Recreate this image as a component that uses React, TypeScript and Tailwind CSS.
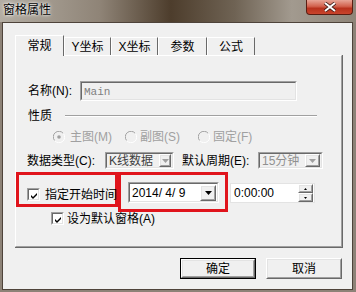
import type { ReactNode } from 'react'

const font = "font-['Liberation_Sans','Noto_Sans_CJK_SC',sans-serif]"

function Sunken({ className, children }: { className?: string; children?: ReactNode }) {
  return (
    <div className={`border border-t-[#a0a0a0] border-l-[#a0a0a0] border-b-white border-r-white ${className ?? ''}`}>
      <div className="h-full w-full border border-t-[#696969] border-l-[#696969] border-b-[#e3e3e3] border-r-[#e3e3e3]">
        {children}
      </div>
    </div>
  )
}

function Raised({ className, children }: { className?: string; children?: ReactNode }) {
  return (
    <div className={`border border-t-white border-l-white border-b-[#696969] border-r-[#696969] bg-[#f0f0f0] ${className ?? ''}`}>
      <div className="flex h-full w-full items-center justify-center border border-t-[#e3e3e3] border-l-[#e3e3e3] border-b-[#a0a0a0] border-r-[#a0a0a0]">
        {children}
      </div>
    </div>
  )
}

function Arrow({ color = '#000' }: { color?: string }) {
  return (
    <svg width="7" height="4" viewBox="0 0 7 4">
      <path d="M0 0h7L3.5 4z" fill={color} />
    </svg>
  )
}

function Checkbox() {
  return (
    <Sunken className="h-[13px] w-[13px] shrink-0 bg-white">
      <svg width="11" height="11" viewBox="0 0 11 11" className="block">
        <path d="M2 5l2 2 4-4v2l-4 4-2-2z" fill="#000" />
      </svg>
    </Sunken>
  )
}

function Radio({ checked }: { checked?: boolean }) {
  return (
    <svg width="12" height="12" viewBox="0 0 12 12" className="shrink-0">
      <circle cx="6" cy="6" r="5.5" fill="#f0f0f0" />
      <path d="M10.2 2.3A5.5 5.5 0 0 0 1.6 9.5" stroke="#a0a0a0" strokeWidth="1" fill="none" />
      <path d="M1.8 9.7A5.5 5.5 0 0 0 10.4 2.5" stroke="#ffffff" strokeWidth="1" fill="none" />
      {checked && <circle cx="6" cy="6" r="1.8" fill="#a0a0a0" />}
    </svg>
  )
}

const tabs = ['常规', 'Y坐标', 'X坐标', '参数', '公式']
const tabWidths = ['w-[49px]', 'w-[47px]', 'w-[47px]', 'w-[49px]', 'w-[48px]']

export default function App() {
  return (
    <div className={`flex h-[292px] w-[356px] flex-col bg-[#8d8277] pb-[2px] pl-[2px] pr-[3px] ${font}`}>
      {/* 标题栏 */}
      <div className="-ml-[2px] -mr-[3px] flex h-[22px] items-start justify-between bg-[linear-gradient(90deg,#b3ada3_0%,#8f8477_28%,#4d3d2c_48%,#6f6354_66%,#a29a8f_82%,#8e8579_100%)]">
        <span className="pl-[3px] pt-[3px] text-[12px] leading-[14px] text-black [text-shadow:0_0_4px_#fff,0_0_2px_#fff]">
          窗格属性
        </span>
        <div className="mr-[3px] flex h-[15px] w-[47px] items-center justify-center rounded-b-[4px] border border-t-0 border-[#5a1d12] bg-[linear-gradient(180deg,#e7a596_0%,#d2624e_45%,#b8321d_60%,#c9452d_100%)]">
          <svg width="12" height="10" viewBox="0 0 12 10">
            <path d="M1 1l10 8M11 1L1 9" stroke="#3a1a14" strokeWidth="3.5" />
            <path d="M1 1l10 8M11 1L1 9" stroke="#fff" strokeWidth="2" />
          </svg>
        </div>
      </div>

      {/* 窗口主体 */}
      <div className="flex flex-1 flex-col border border-[#4e433a] bg-[#f0f0f0]">
        {/* 标签页 */}
        <div className="ml-[12px] mt-[12px] flex h-[20px] items-end">
          {tabs.map((t, i) => (
            <div
              key={t}
              className={`${tabWidths[i]} flex items-center justify-center border-l border-t border-r border-l-white border-t-white border-r-[#696969] bg-[#f0f0f0] text-[12px] leading-[14px] text-black ${
                i === 0 ? 'relative z-10 -mb-px h-[21px]' : 'h-[18px]'
              }`}
            >
              {t}
            </div>
          ))}
        </div>

        <div className="ml-[12px] h-[193px] w-[328px] border-b border-r border-[#696969]">
          <div className="flex h-full flex-col border border-t-white border-l-white border-b-[#a0a0a0] border-r-[#a0a0a0] text-[12px] leading-[14px] text-black">
            {/* 名称 */}
            <div className="mt-[25px] flex h-[20px] items-center pl-[12px]">
              <span className="w-[52px]">名称(N):</span>
              <Sunken className="h-[20px] w-[217px]">
                <div className="pl-[2px] pt-[2px] font-['Liberation_Mono',monospace] text-[11px] leading-[14px] text-[#808080]">Main</div>
              </Sunken>
            </div>

            {/* 性质 */}
            <div className="mt-[8px] flex h-[14px] items-center pl-[12px]">
              <span className="w-[37px]">性质</span>
              <div className="h-[2px] w-[252px] border-b border-t border-b-white border-t-[#a0a0a0]" />
            </div>

            {/* 单选 */}
            <div className="mt-[7px] flex h-[14px] items-center pl-[37px] text-[#a0a0a0]">
              <div className="flex w-[72px] items-center gap-[5px]">
                <Radio checked />
                <span>主图(M)</span>
              </div>
              <div className="flex w-[73px] items-center gap-[3px]">
                <Radio />
                <span>副图(S)</span>
              </div>
              <div className="flex items-center gap-[3px]">
                <Radio />
                <span>固定(F)</span>
              </div>
            </div>

            {/* 数据类型 */}
            <div className="mt-[8px] flex h-[17px] items-center pl-[11px]">
              <span className="w-[78px]">数据类型(C):</span>
              <Sunken className="h-[17px] w-[69px]">
                <div className="flex h-full items-center justify-between pl-[2px] pr-[1px] text-[#404040]">
                  <span>K线数据</span>
                  <Raised className="h-[13px] w-[12px]">
                    <Arrow color="#a0a0a0" />
                  </Raised>
                </div>
              </Sunken>
              <span className="ml-[8px] w-[76px]">默认周期(E):</span>
              <Sunken className="h-[17px] w-[65px]">
                <div className="flex h-full items-center justify-between pl-[2px] pr-[1px] text-[#909090]">
                  <span>15分钟</span>
                  <Raised className="h-[13px] w-[15px]">
                    <Arrow color="#a0a0a0" />
                  </Raised>
                </div>
              </Sunken>
            </div>

            {/* 指定开始时间 */}
            <div className="mt-[3px] flex items-start">
              <div className="flex h-[35px] w-[102px] items-start gap-[5px] border-[3px] border-[#e0141c] pl-[8px] pt-[13px]">
                <Checkbox />
                <span className="whitespace-nowrap">指定开始时间</span>
              </div>
              <div className="h-[40px] w-[110px] border-[3px] border-[#e0141c] pl-[7px] pt-[7px]">
                <Sunken className="h-[21px] w-[91px] bg-white">
                  <div className="flex h-full items-center justify-between pl-[2px] pr-[1px]">
                    <span className="whitespace-pre">2014/ 4/ 9</span>
                    <Raised className="h-[16px] w-[16px]">
                      <Arrow />
                    </Raised>
                  </div>
                </Sunken>
              </div>
              <div className="ml-[2px] mt-[11px] flex h-[20px] w-[85px] items-center justify-between border border-[#e3e3e3] bg-white pl-[3px] pr-[1px]">
                <span>0:00:00</span>
                <div className="flex flex-col">
                  <Raised className="h-[9px] w-[15px]">
                    <svg width="3" height="2" viewBox="0 0 3 2">
                      <path d="M1.5 0L3 2H0z" fill="#000" />
                    </svg>
                  </Raised>
                  <Raised className="h-[9px] w-[15px]">
                    <svg width="3" height="2" viewBox="0 0 3 2">
                      <path d="M0 0h3L1.5 2z" fill="#000" />
                    </svg>
                  </Raised>
                </div>
              </div>
            </div>

            {/* 设为默认窗格 */}
            <div className="flex h-[13px] items-center gap-[3px] pl-[35px]">
              <Checkbox />
              <span>设为默认窗格(A)</span>
            </div>
          </div>
        </div>

        {/* 按钮 */}
        <div className="mt-[10px] flex justify-end gap-[10px] pr-[10px] text-[12px] leading-[14px] text-black">
          <div className="h-[21px] w-[76px] border border-black">
            <Raised className="h-full w-full">确定</Raised>
          </div>
          <Raised className="h-[21px] w-[76px]">取消</Raised>
        </div>
      </div>
    </div>
  )
}
